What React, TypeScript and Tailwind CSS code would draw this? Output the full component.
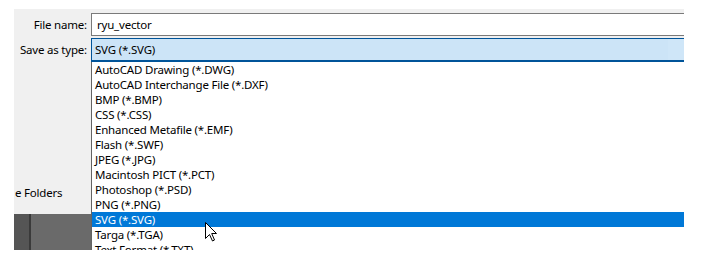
import React from "react"

const types = [
  "AutoCAD Drawing (*.DWG)",
  "AutoCAD Interchange File (*.DXF)",
  "BMP (*.BMP)",
  "CSS (*.CSS)",
  "Enhanced Metafile (*.EMF)",
  "Flash (*.SWF)",
  "JPEG (*.JPG)",
  "Macintosh PICT (*.PCT)",
  "Photoshop (*.PSD)",
  "PNG (*.PNG)",
  "SVG (*.SVG)",
  "Targa (*.TGA)",
  "Text Format (*.TXT)",
]

function Cursor() {
  return (
    <svg width="13" height="20" viewBox="0 0 13 20" className="absolute left-[205px] top-[222px]">
      <path
        d="M0.5 0.5 L0.5 16.5 L4.5 12.5 L7.5 19 L9.5 18 L6.7 11.5 L11.5 11.5 Z"
        fill="white"
        stroke="black"
        strokeWidth="1"
        strokeLinejoin="miter"
      />
    </svg>
  )
}

export default function App() {
  return (
    <div className="relative w-[718px] h-[263px] bg-white overflow-hidden pt-[9px] pl-[14px] font-['Noto_Sans',sans-serif] text-[11.5px] tracking-[-0.2px] text-black">
      <div className="flex w-[670px] h-[241px] bg-[#f0f0f0]">
        {/* labels column */}
        <div className="flex flex-col w-[77px] shrink-0 whitespace-nowrap">
          <div className="h-[23px] mt-[4px] flex items-center justify-end pr-[4px]">File name:</div>
          <div className="h-[24px] mt-[2px] flex items-center justify-end pr-[4px]">Save as type:</div>
          <div className="flex-1 flex items-end pb-[13px] pl-[1px]">e Folders</div>
          <div className="h-[36px] flex">
            <div className="w-[15px] bg-[#555555]" />
            <div className="w-[2px] bg-[#3a3a3a]" />
            <div className="flex-1 bg-[#6a6a6a]" />
          </div>
        </div>

        {/* fields column */}
        <div className="flex flex-col flex-1">
          <div className="h-[23px] mt-[4px] bg-white border border-r-0 border-[#7a7a7a] flex items-center pl-[5px]">
            ryu_vector
          </div>
          <div className="h-[24px] mt-[2px] bg-[#cce4f7] border-t border-l border-b-2 border-[#005499] flex items-center pl-[3px] relative">
            SVG (*.SVG)
            <div className="absolute right-0 top-0 bottom-0 w-[16px] bg-[#cfe6f8]" />
          </div>
          <div className="flex-1 bg-white border-l border-[#646464] overflow-hidden">
            {types.map((t) => (
              <div
                key={t}
                className={
                  "h-[15px] leading-[15px] pl-[3px] whitespace-nowrap " +
                  (t === "SVG (*.SVG)" ? "bg-[#0078d7] text-white" : "")
                }
              >
                {t}
              </div>
            ))}
          </div>
        </div>
      </div>
      <Cursor />
    </div>
  )
}
